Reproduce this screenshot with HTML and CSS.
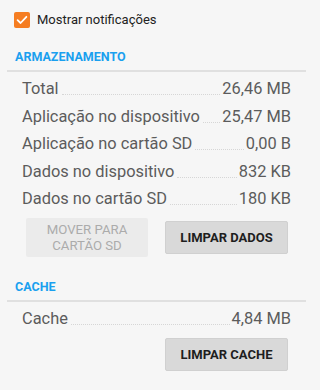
FILE: index.html
```html
<!DOCTYPE html>
<html lang="pt">
<head>
<meta charset="utf-8">
<link rel="stylesheet" href="styles.css">
</head>
<body>
<div class="notif">
  <span class="checkbox">
    <svg width="16" height="16" viewBox="0 0 16 16"><path d="M3.6 8.2 L6.6 11 L12.4 4.8" fill="none" stroke="#fff" stroke-width="1.8" stroke-linecap="round" stroke-linejoin="round"/></svg>
  </span>
  <span class="notif-label">Mostrar notificações</span>
</div>

<div class="section-header storage-header">ARMAZENAMENTO</div>
<div class="divider"></div>
<div class="rows">
  <div class="row"><span class="label">Total</span><span class="dots"></span><span class="value">26,46 MB</span></div>
  <div class="row"><span class="label">Aplicação no dispositivo</span><span class="dots"></span><span class="value">25,47 MB</span></div>
  <div class="row"><span class="label">Aplicação no cartão SD</span><span class="dots"></span><span class="value">0,00 B</span></div>
  <div class="row"><span class="label">Dados no dispositivo</span><span class="dots"></span><span class="value">832 KB</span></div>
  <div class="row"><span class="label">Dados no cartão SD</span><span class="dots"></span><span class="value">180 KB</span></div>
</div>
<div class="buttons">
  <div class="btn btn-disabled">MOVER PARA<br>CARTÃO SD</div>
  <div class="btn btn-primary">LIMPAR DADOS</div>
</div>

<div class="section-header cache-header">CACHE</div>
<div class="divider"></div>
<div class="rows">
  <div class="row"><span class="label">Cache</span><span class="dots"></span><span class="value">4,84 MB</span></div>
</div>
<div class="buttons cache-buttons">
  <div class="btn btn-primary">LIMPAR CACHE</div>
</div>
</body>
</html>
```

FILE: styles.css
```css
html, body {
  margin: 0;
  padding: 0;
  background: #f6f6f6;
  font-family: Roboto, "Noto Sans", "Liberation Sans", sans-serif;
}
body {
  width: 320px;
  height: 390px;
  overflow: hidden;
}
.notif {
  display: flex;
  align-items: center;
  padding: 12px 0 0 14px;
  height: 16px;
}
.checkbox {
  width: 16px;
  height: 16px;
  border-radius: 2px;
  background: #f57d22;
  display: flex;
}
.notif-label {
  margin-left: 7px;
  font-size: 13px;
  color: #222;
  line-height: 16px;
}
.section-header {
  padding-left: 15px;
  font-size: 12.5px;
  line-height: 16px;
  font-weight: bold;
  color: #1aa0ef;
}
.storage-header {
  margin-top: 21px;
}
.cache-header {
  margin-top: 22px;
}
.divider {
  margin: 5px 14px 3px 7px;
  height: 2px;
  background: #e0e0e0;
}
.rows {
  padding: 0 29px 0 22px;
}
.row {
  display: flex;
  height: 27.5px;
  line-height: 27.5px;
  font-size: 16.4px;
  color: #5c5c5c;
}
.label, .value {
  white-space: nowrap;
}
.dots {
  flex: 1;
  height: 19px;
  margin: 0 2px 0 3px;
  border-bottom: 1px dotted #d6d6d6;
}
.buttons {
  display: flex;
  align-items: center;
  gap: 17px;
  padding-left: 26px;
  margin-top: 5.7px;
}
.cache-buttons {
  padding-left: 165px;
}
.btn {
  display: flex;
  align-items: center;
  justify-content: center;
  text-align: center;
  box-sizing: border-box;
  border-radius: 2px;
  font-size: 13px;
}
.btn-disabled {
  width: 122px;
  height: 39px;
  background: #ebebeb;
  color: #ababab;
  font-size: 13.2px;
  line-height: 16px;
}
.btn-primary {
  width: 123px;
  height: 33px;
  background: #d9d9d9;
  border: 1px solid #d0d0d0;
  color: #1e1e1e;
  font-weight: bold;
}
```
